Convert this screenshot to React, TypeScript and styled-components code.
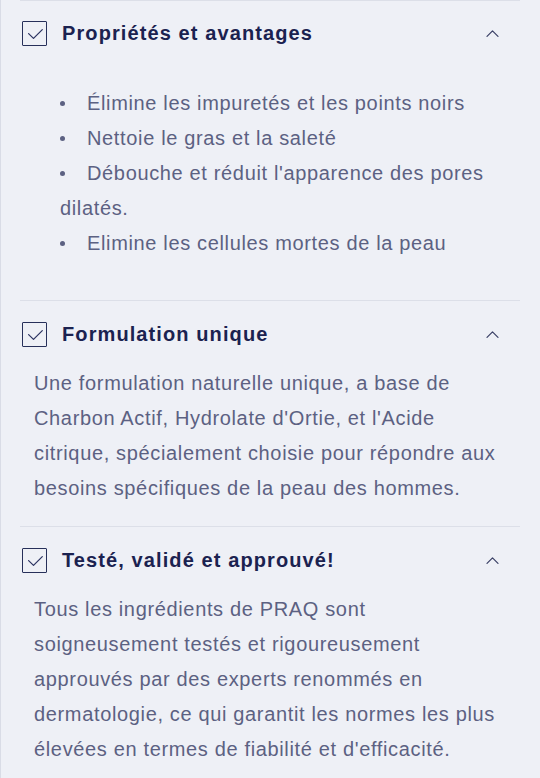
import React from "react";
import styled, { createGlobalStyle } from "styled-components";

const Global = createGlobalStyle`
  html, body { margin: 0; padding: 0; background: #eef0f6; }
  body { font-family: "Liberation Sans", Arial, sans-serif; }
`;

const Page = styled.div`
  width: 540px;
  height: 778px;
  box-sizing: border-box;
  border-left: 1px solid #d9dce6;
  background: #eef0f6;
  padding: 0 20px 0 19px;
  overflow: hidden;
`;

const Item = styled.section`
  border-top: 1px solid #dcdfe8;
`;

const Header = styled.div<{ $top: number }>`
  display: flex;
  align-items: center;
  padding: ${(p) => p.$top}px 21px 0 2px;
  height: 25px;
`;

const Box = styled.span`
  width: 25px;
  height: 25px;
  box-sizing: border-box;
  border: 1.5px solid #27305a;
  border-radius: 1px;
  display: flex;
  align-items: center;
  justify-content: center;
  flex: none;
`;

const Title = styled.h3`
  margin: 0 0 0 15px;
  flex: 1;
  font-family: "Liberation Sans", Arial, sans-serif;
  font-weight: 700;
  font-size: 20px;
  letter-spacing: 1.1px;
  color: #1b2250;
`;

const Text = styled.div`
  font-size: 20px;
  letter-spacing: 0.65px;
  line-height: 35px;
  color: #5c6182;
`;

const List = styled(Text).attrs({ as: "ul" })`
  list-style: none;
  margin: 0;
  padding: 40px 0 39px 40px;
`;

const Li = styled.li`
  &::before {
    content: "";
    display: inline-block;
    width: 5px;
    height: 5px;
    border-radius: 50%;
    background: #5c6182;
    margin: 0 22px 3px 0;
    vertical-align: middle;
  }
`;

const Para = styled(Text).attrs({ as: "p" })<{ $bottom: number }>`
  margin: 0;
  padding: 19px 0 ${(p) => p.$bottom}px 14px;
  white-space: nowrap;
`;

const Check = () => (
  <svg width="16" height="16" viewBox="0 0 16 16" fill="none">
    <path d="M1.6 7.6L6.5 12.4 15.3 3.6" stroke="#2c3462" strokeWidth="1.25" strokeLinecap="round" strokeLinejoin="round" />
  </svg>
);

const Chevron = () => (
  <svg width="13" height="7" viewBox="0 0 13 7" fill="none">
    <path d="M1 6.3L6.5 0.8 12 6.3" stroke="#3a4066" strokeWidth="1.2" strokeLinecap="round" strokeLinejoin="round" />
  </svg>
);

const Head = ({ title, top }: { title: string; top: number }) => (
  <Header $top={top}>
    <Box><Check /></Box>
    <Title>{title}</Title>
    <Chevron />
  </Header>
);

export default function App() {
  return (
    <>
      <Global />
      <Page>
        <Item>
          <Head title="Propriétés et avantages" top={20} />
          <List>
            <Li>Élimine les impuretés et les points noirs</Li>
            <Li>Nettoie le gras et la saleté</Li>
            <Li>Débouche et réduit l'apparence des pores dilatés.</Li>
            <Li>Elimine les cellules mortes de la peau</Li>
          </List>
        </Item>
        <Item>
          <Head title="Formulation unique" top={21} />
          <Para $bottom={20}>
            Une formulation naturelle unique, a base de<br />
            Charbon Actif, Hydrolate d'Ortie, et l'Acide<br />
            citrique, spécialement choisie pour répondre aux<br />
            besoins spécifiques de la peau des hommes.
          </Para>
        </Item>
        <Item>
          <Head title="Testé, validé et approuvé!" top={21} />
          <Para $bottom={20}>
            Tous les ingrédients de PRAQ sont<br />
            soigneusement testés et rigoureusement<br />
            approuvés par des experts renommés en<br />
            dermatologie, ce qui garantit les normes les plus<br />
            élevées en termes de fiabilité et d'efficacité.
          </Para>
        </Item>
      </Page>
    </>
  );
}
